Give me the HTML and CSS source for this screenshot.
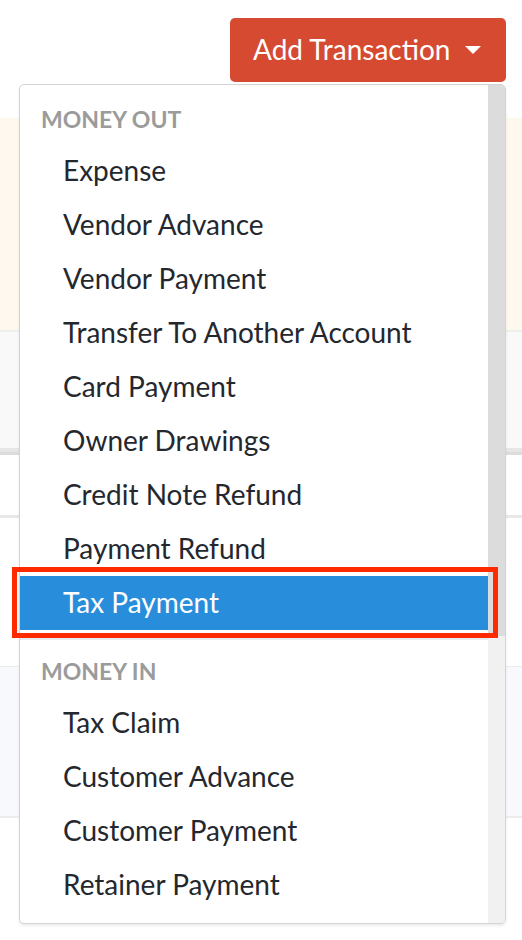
FILE: index.html
```html
<!DOCTYPE html>
<html lang="en">
  <head>
    <meta charset="UTF-8" />
    <meta name="viewport" content="width=device-width, initial-scale=1.0" />
    <title>Add Transaction</title>
    <link rel="stylesheet" href="styles.css">
  </head>
  <body>
    <div class="page">
      <div class="toolbar">
        <button class="add-btn">
          Add Transaction
          <span class="caret"></span>
        </button>
      </div>

      <!-- page content behind the open menu -->
      <div class="band band-cream"></div>
      <div class="band band-gray"></div>
      <div class="band band-white"></div>
      <div class="band band-white2"></div>
      <div class="band band-blue"></div>
      <div class="band band-rest"></div>

      <div class="menu">
        <div class="menu-list">
          <p class="menu-header">Money Out</p>
          <a class="menu-item">Expense</a>
          <a class="menu-item">Vendor Advance</a>
          <a class="menu-item">Vendor Payment</a>
          <a class="menu-item">Transfer To Another Account</a>
          <a class="menu-item">Card Payment</a>
          <a class="menu-item">Owner Drawings</a>
          <a class="menu-item">Credit Note Refund</a>
          <a class="menu-item">Payment Refund</a>
          <a class="menu-item active">Tax Payment<span class="highlight"></span></a>
          <div class="menu-divider"></div>
          <p class="menu-header">Money In</p>
          <a class="menu-item">Tax Claim</a>
          <a class="menu-item">Customer Advance</a>
          <a class="menu-item">Customer Payment</a>
          <a class="menu-item">Retainer Payment</a>
        </div>
        <div class="scrollbar">
          <div class="scroll-thumb"></div>
        </div>
      </div>
    </div>
  </body>
</html>
```

FILE: styles.css
```css
body {
  margin: 0;
  font-family: Lato, "Open Sans", sans-serif;
  background-color: white;
}

.page {
  position: relative;
  width: 522px;
  height: 940px;
  overflow: hidden;
}

.toolbar {
  height: 118px;
  display: flex;
  justify-content: flex-end;
  align-items: flex-start;
  padding-right: 16px;
  box-sizing: border-box;
}

.add-btn {
  margin-top: 18px;
  width: 276px;
  height: 64px;
  display: flex;
  align-items: center;
  gap: 15px;
  padding: 0 0 3px 23px;
  font-family: inherit;
  font-size: 28px;
  color: white;
  background-color: #d64a31;
  border: none;
  border-radius: 5px;
  cursor: pointer;
}

.caret {
  width: 0;
  height: 0;
  border-left: 8px solid transparent;
  border-right: 8px solid transparent;
  border-top: 8px solid white;
  margin-top: 3px;
}

/* background bands */
.band-cream {
  height: 212px;
  background-color: #fff8ee;
}

.band-gray {
  height: 116px;
  background-color: #f9f9f9;
  border-top: 2px solid #efefef;
  border-bottom: 4px solid #e6e6e6;
  box-shadow: 0 3px 0 #dcdcdc;
}

.band-white {
  height: 59px;
  margin-top: 4px;
}

.band-white2 {
  height: 148px;
  border-top: 3px solid #e8e8e8;
}

.band-blue {
  height: 149px;
  background-color: #f8f9fd;
  border-top: 1px solid #ececec;
  border-bottom: 2px solid #ececec;
}

/* dropdown menu */
.menu {
  position: absolute;
  left: 19px;
  top: 84px;
  width: 487px;
  height: 840px;
  box-sizing: border-box;
  display: flex;
  background: white;
  border: 1px solid #d4d4d4;
  border-radius: 5px;
  box-shadow: 0 2px 3px rgba(0, 0, 0, 0.08);
}

.menu-list {
  flex: 1;
  padding-top: 11px;
}

.menu-header {
  margin: 0;
  height: 48px;
  line-height: 46px;
  padding-left: 21px;
  font-size: 23px;
  font-weight: bold;
  text-transform: uppercase;
  color: #9b9b9b;
}

.menu-item {
  position: relative;
  display: block;
  height: 54px;
  line-height: 52px;
  padding-left: 43px;
  font-size: 28px;
  color: #24282e;
  cursor: pointer;
}

.menu-item.active {
  background-color: #288edc;
  color: white;
}

.highlight {
  position: absolute;
  top: -9px;
  left: -8px;
  right: -10px;
  bottom: -8px;
  border: 5px solid #ff2a00;
}

.menu-divider {
  margin: 8px 0;
  height: 2px;
  background-color: #e8ecef;
}

.scrollbar {
  width: 17px;
  background-color: #f1f1f1;
  border-radius: 0 4px 4px 0;
}

.scroll-thumb {
  height: 551px;
  background-color: #dcdcdc;
  border-radius: 0 4px 0 0;
}
```
